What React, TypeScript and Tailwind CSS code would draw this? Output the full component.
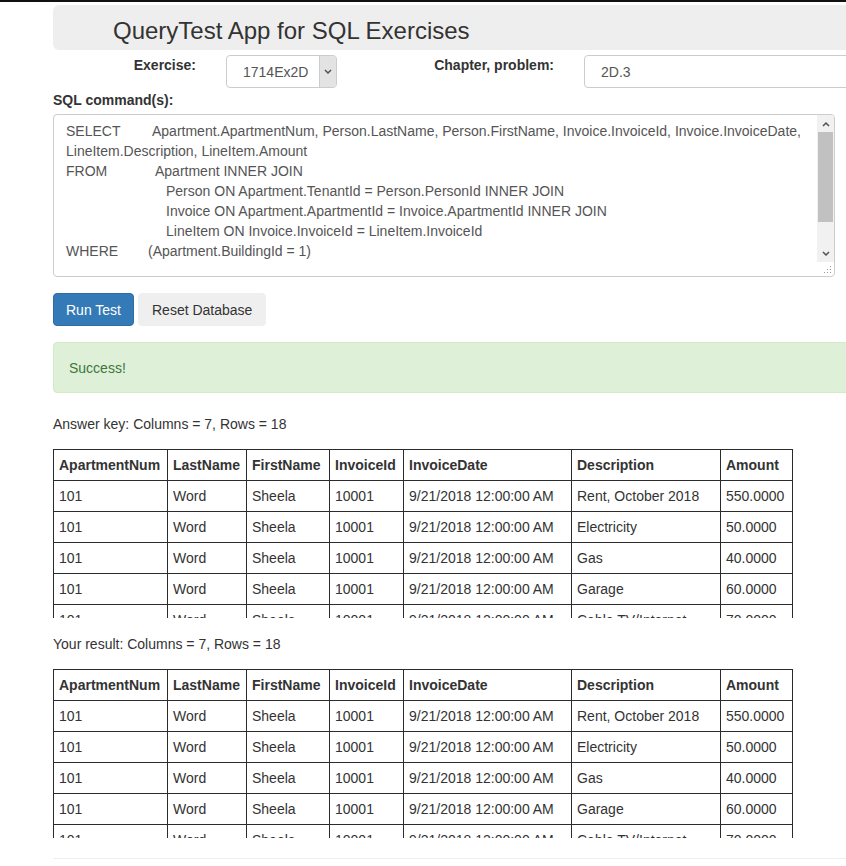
import React from 'react';

const COLUMNS = ['ApartmentNum', 'LastName', 'FirstName', 'InvoiceId', 'InvoiceDate', 'Description', 'Amount'];
const COL_WIDTHS = [114, 79, 83, 74, 168, 149, 72];

const ROWS = [
  ['101', 'Word', 'Sheela', '10001', '9/21/2018 12:00:00 AM', 'Rent, October 2018', '550.0000'],
  ['101', 'Word', 'Sheela', '10001', '9/21/2018 12:00:00 AM', 'Electricity', '50.0000'],
  ['101', 'Word', 'Sheela', '10001', '9/21/2018 12:00:00 AM', 'Gas', '40.0000'],
  ['101', 'Word', 'Sheela', '10001', '9/21/2018 12:00:00 AM', 'Garage', '60.0000'],
  ['101', 'Word', 'Sheela', '10001', '9/21/2018 12:00:00 AM', 'Cable TV/Internet', '70.0000'],
];

function ResultTable() {
  return (
    <div className="h-[169px] overflow-hidden">
      <table className="border-collapse table-fixed border border-[#2b2b2b]" style={{ width: 739 }}>
        <colgroup>
          {COL_WIDTHS.map((w, i) => (
            <col key={i} style={{ width: w }} />
          ))}
        </colgroup>
        <thead>
          <tr>
            {COLUMNS.map(c => (
              <th key={c} className="border border-[#2b2b2b] px-[5px] py-[5px] text-left font-bold leading-5 whitespace-nowrap">{c}</th>
            ))}
          </tr>
        </thead>
        <tbody>
          {ROWS.map((r, i) => (
            <tr key={i}>
              {r.map((v, j) => (
                <td key={j} className="border border-[#2b2b2b] px-[5px] py-[5px] leading-5 whitespace-nowrap">{v}</td>
              ))}
            </tr>
          ))}
        </tbody>
      </table>
    </div>
  );
}

function Chevron({ up }: { up?: boolean }) {
  return (
    <svg width="8" height="6" viewBox="0 0 8 6">
      <path d={up ? 'M1 5 L4 2 L7 5' : 'M1 1 L4 4 L7 1'} fill="none" stroke="#505050" strokeWidth="1.5" />
    </svg>
  );
}

export default function App() {
  return (
    <div className="w-[846px] h-[866px] overflow-hidden bg-white text-[14px] leading-5 text-[#333]" style={{ fontFamily: '"Liberation Sans", Arial, sans-serif' }}>
      <div className="h-[2px] bg-[#111]" />
      <div className="ml-[53px] w-[1100px]">
        {/* header */}
        <div className="mt-[3px] h-[45px] bg-[#eee] rounded-[6px] pl-[60px] pt-[13px]">
          <h1 className="text-[24px] leading-[26px] font-normal text-[#333]">QueryTest App for SQL Exercises</h1>
        </div>

        {/* exercise row */}
        <div className="mt-[5px] flex items-start">
          <label className="w-[143px] text-right font-bold leading-5">Exercise:</label>
          <div className="relative ml-[30px] w-[111px] h-[33px] border border-[#ccc] rounded-[4px] bg-white flex items-center pl-[16px] text-[#555]">
            1714Ex2D
            <div className="absolute right-0 top-0 bottom-0 w-[17px] bg-[#e3e3e3] border-l border-[#ccc] rounded-r-[3px] flex items-center justify-center">
              <Chevron />
            </div>
          </div>
          <label className="w-[217px] text-right font-bold leading-5">Chapter, problem:</label>
          <div className="ml-[30px] flex-1 h-[33px] border border-[#ccc] rounded-[4px] bg-white flex items-center pl-[16px] text-[#555]">
            2D.3
          </div>
        </div>

        <div className="mt-[2px] font-bold">SQL command(s):</div>

        {/* sql textarea */}
        <div className="relative mt-[4px] w-[782px] h-[163px] border border-[#ccc] rounded-[4px] bg-white overflow-hidden">
          <div className="pl-[12px] pr-[30px] pt-[6px] text-[#555] whitespace-nowrap">
            <div><span className="inline-block w-[86px]">SELECT</span>Apartment.ApartmentNum, Person.LastName, Person.FirstName, Invoice.InvoiceId, Invoice.InvoiceDate,</div>
            <div>LineItem.Description, LineItem.Amount</div>
            <div><span className="inline-block w-[89px]">FROM</span>Apartment INNER JOIN</div>
            <div className="pl-[100px]">Person ON Apartment.TenantId = Person.PersonId INNER JOIN</div>
            <div className="pl-[100px]">Invoice ON Apartment.ApartmentId = Invoice.ApartmentId INNER JOIN</div>
            <div className="pl-[100px]">LineItem ON Invoice.InvoiceId = LineItem.InvoiceId</div>
            <div><span className="inline-block w-[82px]">WHERE</span>(Apartment.BuildingId = 1)</div>
          </div>
          {/* scrollbar */}
          <div className="absolute right-0 top-0 w-[17px] h-[147px] bg-[#f1f1f1] flex flex-col">
            <div className="h-[17px] flex items-center justify-center"><Chevron up /></div>
            <div className="mx-[1px] h-[90px] bg-[#c1c1c1]" />
            <div className="flex-1" />
            <div className="h-[17px] flex items-center justify-center"><Chevron /></div>
          </div>
          <div className="absolute right-[1px] bottom-[1px] w-[12px] h-[12px]">
            <svg width="12" height="12" viewBox="0 0 12 12">
              <g fill="#999">
                <rect x="9" y="3" width="1" height="1" />
                <rect x="6" y="6" width="1" height="1" />
                <rect x="9" y="6" width="1" height="1" />
                <rect x="3" y="9" width="1" height="1" />
                <rect x="6" y="9" width="1" height="1" />
                <rect x="9" y="9" width="1" height="1" />
              </g>
            </svg>
          </div>
        </div>

        {/* buttons */}
        <div className="mt-[16px] flex gap-[4px]">
          <button className="h-[33px] px-[12px] bg-[#337ab7] border border-[#2e6da4] rounded-[4px] text-white">Run Test</button>
          <button className="h-[33px] px-[13px] bg-[#efefef] border border-[#efefef] rounded-[4px] text-[#333]">Reset Database</button>
        </div>

        <div className="mt-[16px] h-[51px] bg-[#dff0d8] border border-[#d6e9c6] rounded-[4px] px-[15px] flex items-center text-[#3c763d]">
          Success!
        </div>

        <div className="mt-[21px] mb-[15px]">Answer key: Columns = 7, Rows = 18</div>
        <ResultTable />

        <div className="mt-[16px] mb-[15px]">Your result: Columns = 7, Rows = 18</div>
        <ResultTable />

        <div className="mt-[20px] h-[1px] bg-[#eee]" />
      </div>
    </div>
  );
}
